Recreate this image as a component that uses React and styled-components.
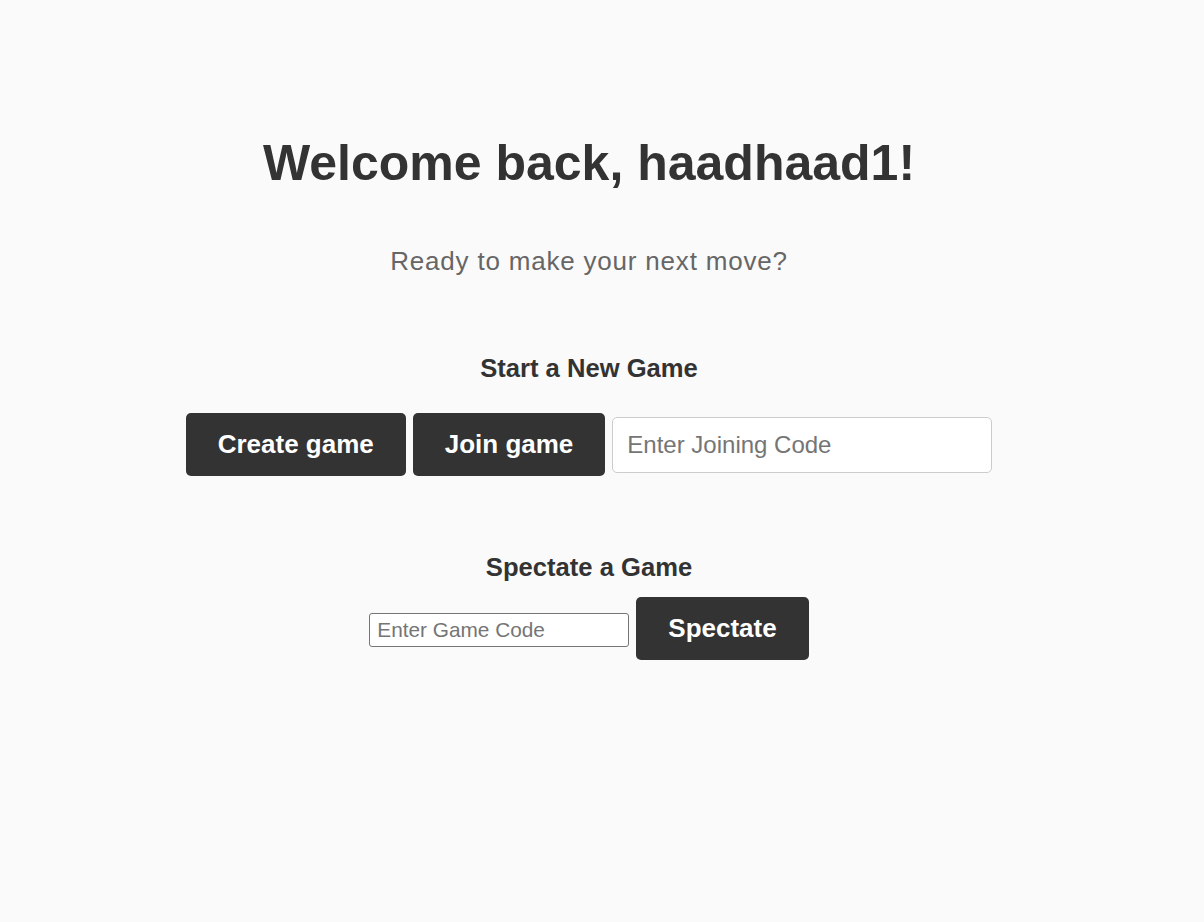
import React from 'react';
import styled, { createGlobalStyle } from 'styled-components';

const GlobalStyle = createGlobalStyle`
  html, body {
    margin: 0;
    padding: 0;
    background: #fafafa;
  }
  body {
    font-family: "Liberation Sans", Arial, sans-serif;
    color: #333333;
  }
`;

const Page = styled.main`
  min-height: 922px;
  box-sizing: border-box;
  padding: 134px 26px 0 0;
  display: flex;
  flex-direction: column;
  align-items: center;
  text-align: center;
`;

const Title = styled.h1`
  margin: 0;
  font-size: 50px;
  font-weight: 700;
  color: #333333;
`;

const Subtitle = styled.p`
  margin: 54px 0 0;
  font-size: 26px;
  letter-spacing: 0.8px;
  color: #666666;
`;

const SectionTitle = styled.h2`
  margin: ${({ $top }) => $top}px 0 0;
  font-size: 25.6px;
  font-weight: 700;
  color: #333333;
`;

const Row = styled.div`
  display: flex;
  align-items: center;
  gap: 7px;
  margin-top: ${({ $top }) => $top}px;
`;

const DarkButton = styled.button`
  height: 63px;
  padding: 0 32px;
  border: none;
  border-radius: 5px;
  background: #333333;
  color: #ffffff;
  font-family: "Liberation Sans", Arial, sans-serif;
  font-size: 26px;
  font-weight: 700;
  cursor: pointer;
`;

const CodeInput = styled.input`
  box-sizing: border-box;
  width: 380px;
  height: 56px;
  padding: 0 14px;
  border: 1px solid #cccccc;
  border-radius: 5px;
  background: #ffffff;
  font-family: "Liberation Sans", Arial, sans-serif;
  font-size: 24px;
  color: #333333;
  outline: none;

  &::placeholder {
    color: #757575;
  }
`;

const SmallInput = styled.input`
  box-sizing: border-box;
  width: 260px;
  height: 34px;
  margin-top: 2px;
  padding: 0 7px;
  border: 1px solid #767676;
  border-radius: 3px;
  background: #ffffff;
  font-family: "Liberation Sans", Arial, sans-serif;
  font-size: 20.8px;
  color: #333333;
  outline: none;

  &::placeholder {
    color: #757575;
  }
`;

export default function App() {
  return (
    <>
      <GlobalStyle />
      <Page>
        <Title>Welcome back, haadhaad1!</Title>
        <Subtitle>Ready to make your next move?</Subtitle>

        <SectionTitle $top={77}>Start a New Game</SectionTitle>
        <Row $top={30}>
          <DarkButton>Create game</DarkButton>
          <DarkButton>Join game</DarkButton>
          <CodeInput placeholder="Enter Joining Code" />
        </Row>

        <SectionTitle $top={77}>Spectate a Game</SectionTitle>
        <Row $top={15}>
          <SmallInput placeholder="Enter Game Code" />
          <DarkButton>Spectate</DarkButton>
        </Row>
      </Page>
    </>
  );
}
